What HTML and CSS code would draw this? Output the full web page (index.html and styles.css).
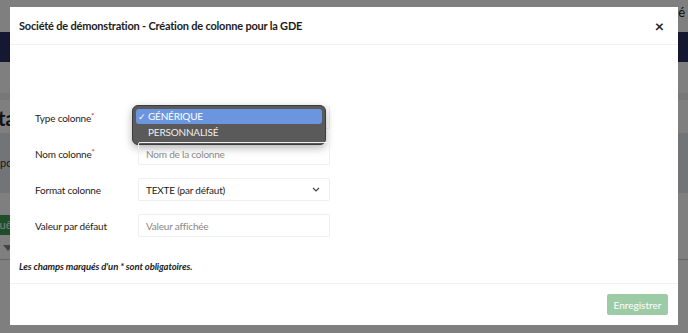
FILE: index.html
```html
<!DOCTYPE html>
<html>

<head>
    <title>Création de colonne</title>
    <link rel="stylesheet" href="styles.css">
</head>

<body>
    <!-- Page behind the modal -->
    <div class="page">
        <div class="topbar"><span class="company">Société</span></div>
        <div class="navbar"></div>
        <div class="band"></div>
        <div class="page-title">Data</div>
        <div class="info">Importez</div>
        <div class="actions"><span class="green-btn">Requêtes</span></div>
        <div class="table-head"><span class="funnel"></span></div>
    </div>

    <div class="overlay"></div>

    <div class="modal">
        <div class="modal-header">
            <h1>Société de démonstration - Création de colonne pour la GDE</h1>
            <span class="close">&times;</span>
        </div>

        <div class="modal-body">
            <div class="form">
                <div class="row">
                    <label>Type colonne<sup>*</sup></label>
                    <div class="field select-field">
                        <div class="menu">
                            <div class="menu-item active"><span class="check">&#10003;</span>GÉNÉRIQUE</div>
                            <div class="menu-item">PERSONNALISÉ</div>
                        </div>
                    </div>
                </div>
                <div class="row">
                    <label>Nom colonne<sup>*</sup></label>
                    <div class="field placeholder">Nom de la colonne</div>
                </div>
                <div class="row">
                    <label>Format colonne</label>
                    <div class="field select-field">
                        <span>TEXTE (par défaut)</span>
                        <svg class="chevron" width="8" height="5" viewBox="0 0 8 5">
                            <path d="M1 1 L4 4 L7 1" fill="none" stroke="#444" stroke-width="1.2" />
                        </svg>
                    </div>
                </div>
                <div class="row">
                    <label>Valeur par défaut</label>
                    <div class="field placeholder">Valeur affichée</div>
                </div>
            </div>

            <p class="note">Les champs marqués d'un * sont obligatoires.</p>
        </div>

        <div class="modal-footer">
            <button>Enregistrer</button>
        </div>
    </div>
</body>

</html>
```

FILE: styles.css
```css
body {
    margin: 0;
    font-family: Lato, "Open Sans", Arial, sans-serif;
    background-color: #fff;
    overflow: hidden;
}

/* Page behind the overlay */
.page {
    height: 333px;
    overflow: hidden;
}

.topbar {
    height: 32px;
    display: flex;
    justify-content: flex-end;
    align-items: center;
}

.company {
    font-size: 13px;
    color: #222;
    margin-right: 3px;
    margin-top: -8px;
}

.navbar {
    height: 30px;
    background-color: #2b3160;
}

.band {
    height: 7px;
    margin-top: 31px;
    background-color: #eef0f3;
}

.page-title {
    height: 33px;
    line-height: 36px;
    font-size: 20px;
    font-weight: bold;
    color: #222;
    margin-left: -27px;
}

.info {
    height: 60px;
    background-color: #e7e9ef;
    font-size: 11px;
    line-height: 60px;
    color: #333;
    margin-left: -12px;
}

.actions {
    height: 20px;
    margin-top: 20px;
}

.green-btn {
    display: inline-block;
    background-color: #3c9a50;
    color: #fff;
    font-size: 11px;
    line-height: 20px;
    padding: 0 6px;
    margin-left: -25px;
}

.table-head {
    height: 18px;
    margin-top: 8px;
    border-bottom: 1px solid #ccc;
    position: relative;
}

.funnel {
    position: absolute;
    left: 3px;
    top: 4px;
    width: 0;
    height: 0;
    border-left: 5px solid transparent;
    border-right: 5px solid transparent;
    border-top: 6px solid #888;
}

.overlay {
    position: fixed;
    top: 0;
    left: 0;
    width: 100%;
    height: 100%;
    background: rgba(0, 0, 0, 0.5);
}

/* Modal */
.modal {
    position: fixed;
    top: 7px;
    left: 10px;
    width: 668px;
    height: 318px;
    background-color: #fff;
    display: flex;
    flex-direction: column;
}

.modal-header {
    height: 37px;
    display: flex;
    align-items: center;
    justify-content: space-between;
    padding: 0 14px 0 9px;
    border-bottom: 1px solid #f0f0f0;
}

h1 {
    margin: 0;
    font-size: 11px;
    letter-spacing: -0.2px;
    font-weight: bold;
    color: #1c1c1c;
}

.close {
    font-size: 16px;
    font-weight: bold;
    color: #222;
    line-height: 1;
}

.modal-body {
    flex: 1;
    padding-top: 61px;
}

.form {
    display: flex;
    flex-direction: column;
    gap: 13px;
    padding-left: 25px;
}

.row {
    display: flex;
    align-items: center;
    height: 23px;
}

label {
    width: 103px;
    font-size: 10px;
    letter-spacing: -0.2px;
    color: #222;
}

sup {
    color: #e0303a;
    font-size: 8px;
    vertical-align: 3px;
    line-height: 0;
}

.field {
    position: relative;
    box-sizing: border-box;
    width: 192px;
    height: 23px;
    border: 1px solid #efefef;
    border-radius: 2px;
    padding: 0 7px;
    display: flex;
    align-items: center;
    font-size: 10px;
    letter-spacing: -0.2px;
    color: #222;
}

.placeholder {
    color: #888;
}

.select-field {
    justify-content: space-between;
}

.chevron {
    margin-right: 2px;
}

/* Native dropdown list, opened over the type field */
.menu {
    position: absolute;
    top: -2px;
    left: -7px;
    width: 194px;
    box-sizing: border-box;
    padding: 3px 3px 4px;
    background-color: #5a5a5a;
    border: 1px solid #3c3c3c;
    border-radius: 6px;
    box-shadow: 0 3px 8px rgba(0, 0, 0, 0.3);
}

.menu-item {
    height: 15px;
    line-height: 15px;
    padding-left: 12px;
    font-size: 10px;
    color: #eee;
    border-radius: 3px;
    position: relative;
}

.menu-item.active {
    background-color: #6b96df;
    color: #fff;
    margin-bottom: 1px;
}

.check {
    position: absolute;
    left: 2px;
    font-size: 9px;
}

.note {
    margin: 24px 0 0 9px;
    font-size: 9.5px;
    letter-spacing: -0.1px;
    font-weight: bold;
    font-style: italic;
    color: #1c1c1c;
}

.modal-footer {
    height: 41px;
    border-top: 1px solid #f0f0f0;
    display: flex;
    align-items: center;
    justify-content: flex-end;
    padding-right: 10px;
}

button {
    background-color: #9dcba6;
    color: #fff;
    font-family: inherit;
    font-size: 10px;
    height: 21px;
    width: 61px;
    padding: 0;
    border: none;
    border-radius: 2px;
}
```
